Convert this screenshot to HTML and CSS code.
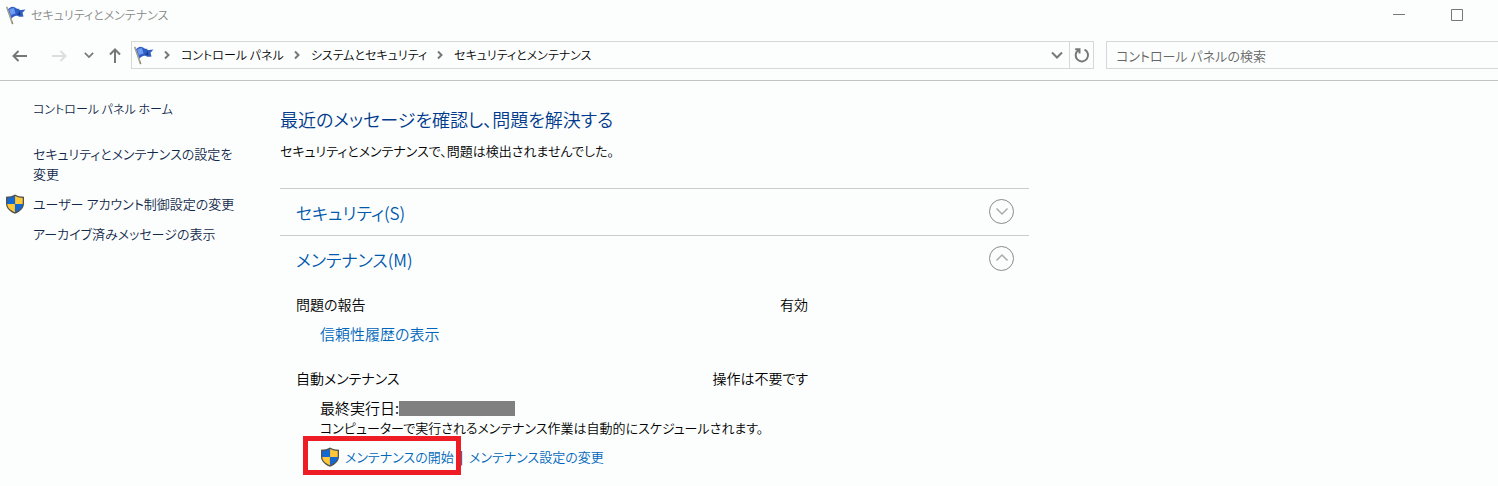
FILE: index.html
```html
<!DOCTYPE html>
<html lang="ja">
<head>
    <meta charset="UTF-8">
    <meta name="viewport" content="width=device-width, initial-scale=1.0">
    <title>セキュリティとメンテナンス</title>
    <link rel="stylesheet" href="styles.css">
</head>
<body>
    <!-- shared icons -->
    <svg class="defs" width="0" height="0" aria-hidden="true">
        <symbol id="flag" viewBox="0 0 20 20">
            <path d="M1 2.5l5.5 16" stroke="#8b8578" stroke-width="1.6" stroke-linecap="round"/>
            <path d="M1 1.6l5 15" stroke="#c9c5b8" stroke-width=".6"/>
            <path d="M2.2 4.2C4 2 6.500 1 9 2.600c1.500 1 2.800 1.500 4.300 1.200l-.3 1.500 6.500-.8-3 3.200 1 3.800c-2 .4-3.600.6-5.300-.3-2.200-1-4-.4-6.700 2.300z" fill="#2f5fc4"/>
            <path d="M3.200 5C5 3.200 6.500 2.800 8.200 3.600l1.400 5.200c-1.500-.3-3 .2-4.600 1.600z" fill="#6f9cf0"/>
            <path d="M13.300 3.800l1.200 6.600-4-1.300 2.500-1z" fill="#173a8c"/>
        </symbol>
        <symbol id="shield" viewBox="0 0 20 20">
            <path d="M10 .4c2.700 1.500 5.400 2.200 9 2.300v6.800c0 4.700-3.600 8.200-9 10.300C4.600 17.700 1 14.200 1 9.500V2.700C4.600 2.600 7.300 1.900 10 .4z" fill="#53524c"/>
            <path d="M9.900 2v7.900H2.300V4.100c2.700-.2 5.300-.8 7.600-2.100z" fill="#1269d3"/>
            <path d="M10.100 2c2.300 1.300 4.900 1.900 7.600 2.100v5.800h-7.600z" fill="#ffc83a"/>
            <path d="M2.300 10.100h7.600v8.200c-4.500-1.900-7.500-4.700-7.600-8.200z" fill="#ffc83a"/>
            <path d="M17.700 10.100h-7.600v8.200c4.500-1.900 7.500-4.700 7.600-8.200z" fill="#1269d3"/>
        </symbol>
        <symbol id="down" viewBox="0 0 12 12"><path d="M1 3.500l5 5 5-5"/></symbol>
        <symbol id="right" viewBox="0 0 12 12"><path d="M4 2.500l3.500 3.500L4 9.500"/></symbol>
    </svg>

    <header class="titlebar">
        <svg class="flag"><use href="#flag"/></svg>
        <span class="title">セキュリティとメンテナンス</span>
        <button class="window-btn" aria-label="最小化"><svg class="line-icon thin" width="14" height="14"><path d="M1 6.500h12"/></svg></button>
        <button class="window-btn" aria-label="最大化"><svg class="line-icon thin" width="14" height="14"><path d="M1.500 1.500h11v11h-11z"/></svg></button>
    </header>

    <nav class="toolbar">
        <div class="history">
            <button aria-label="戻る"><svg class="line-icon" width="16" height="14"><path d="M15 8H1.500M6.500 3L1.500 8l5 5"/></svg></button>
            <button aria-label="進む" disabled><svg class="line-icon" width="16" height="14"><path d="M1 8h13.500M9.500 3l5 5-5 5"/></svg></button>
            <button aria-label="最近表示した場所"><svg class="line-icon" width="10" height="10"><use href="#down"/></svg></button>
            <button aria-label="上へ"><svg class="line-icon" width="12" height="16"><path d="M6 16V2.500M1 7.500l5-5 5 5"/></svg></button>
        </div>
        <div class="address">
            <svg class="flag"><use href="#flag"/></svg>
            <svg class="line-icon sep" width="12" height="12"><use href="#right"/></svg>
            <a href="#">コントロール パネル</a>
            <svg class="line-icon sep" width="12" height="12"><use href="#right"/></svg>
            <a href="#">システムとセキュリティ</a>
            <svg class="line-icon sep" width="12" height="12"><use href="#right"/></svg>
            <a href="#">セキュリティとメンテナンス</a>
            <button class="drop" aria-label="以前の場所"><svg class="line-icon" width="12" height="12"><use href="#down"/></svg></button>
            <button class="refresh" aria-label="最新の情報に更新"><svg class="line-icon" width="16" height="16"><path d="M10.500 2.600A6.200 6.200 0 1 1 4.200 3.200M1.200 2.200h4.300v4.300"/></svg></button>
        </div>
        <input class="search" type="search" aria-label="検索" placeholder="コントロール パネルの検索">
    </nav>

    <div class="content">
        <aside class="sidebar">
            <a class="home" href="#">コントロール パネル ホーム</a>
            <a href="#">セキュリティとメンテナンスの設定を<br>変更</a>
            <a class="with-shield" href="#"><svg class="shield"><use href="#shield"/></svg>ユーザー アカウント制御設定の変更</a>
            <a href="#">アーカイブ済みメッセージの表示</a>
        </aside>

        <main class="main">
            <h1>最近のメッセージを確認し、問題を解決する</h1>
            <p class="lead">セキュリティとメンテナンスで、問題は検出されませんでした。</p>

            <section class="group">
                <div class="group-head">
                    <h2>セキュリティ(S)</h2>
                    <button class="toggle" aria-label="セキュリティを展開"><svg class="line-icon" width="14" height="14" viewBox="0 0 14 14"><path d="M1.500 4.500L7 10l5.500-5.500"/></svg></button>
                </div>
            </section>

            <section class="group">
                <div class="group-head">
                    <h2>メンテナンス(M)</h2>
                    <button class="toggle" aria-label="メンテナンスを折りたたむ"><svg class="line-icon" width="14" height="14" viewBox="0 0 14 14"><path d="M1.500 9.500L7 4l5.500 5.500"/></svg></button>
                </div>
                <div class="item">
                    <div class="status"><span>問題の報告</span><span>有効</span></div>
                    <div class="details">
                        <a class="link" href="#">信頼性履歴の表示</a>
                    </div>
                </div>
                <div class="item">
                    <div class="status"><span>自動メンテナンス</span><span>操作は不要です</span></div>
                    <div class="details">
                        <div class="last-run">最終実行日:<span class="masked"></span></div>
                        <div class="kana">コンピューターで実行されるメンテナンス作業は自動的にスケジュールされます。</div>
                        <div class="actions">
                            <a class="link start" href="#"><svg class="shield"><use href="#shield"/></svg>メンテナンスの開始</a>
                            <span class="bar">|</span>
                            <a class="link" href="#">メンテナンス設定の変更</a>
                        </div>
                    </div>
                </div>
            </section>
        </main>
    </div>
</body>
</html>
```
FILE: styles.css
```css
* { box-sizing: border-box; }
body { margin: 0; background: #fcfefd; color: #000; font: 14px/20px "Noto Sans CJK JP", sans-serif; font-weight: 350; font-feature-settings: "palt"; overflow-x: hidden; }
a { color: inherit; text-decoration: none; }
a:hover { text-decoration: underline; }
button { padding: 0; border: none; background: none; color: inherit; display: flex; align-items: center; justify-content: center; }
h1, h2, p { margin: 0; font-weight: inherit; }
.defs { position: absolute; }
.line-icon { display: block; fill: none; stroke: currentColor; stroke-width: 2; flex: none; }
.line-icon.thin { stroke-width: 1; }
.flag { width: 20px; height: 20px; flex: none; }
.shield { width: 20px; height: 20px; flex: none; }

.titlebar { display: flex; align-items: center; height: 30px; padding-left: 6px; color: #888; font-size: 12px; }
.title { flex: 1; margin-left: 5px; }
.window-btn { width: 58px; height: 30px; color: #777; }
.window-btn:last-child { margin-right: 12px; }

.toolbar { display: flex; align-items: center; height: 51px; border-bottom: 1px solid #c2c4c3; }
.history { display: flex; align-items: center; width: 131px; padding-left: 12px; color: #777; }
.history button { width: 16px; height: 24px; }
.history button:nth-child(2) { margin-left: 23px; color: #ddd; }
.history button:nth-child(3) { margin-left: 14px; }
.history button:nth-child(4) { margin-left: 10px; }
.address { display: flex; align-items: center; flex: 18; height: 28px; border: 1px solid #d6d8d7; padding-left: 2px; font-size: 12px; }
.sep { margin: 0 8px 0 7px; color: #777; }
.drop { width: 24px; height: 26px; margin-left: auto; color: #777; }
.refresh { width: 24px; height: 26px; border-left: 1px solid #d6d8d7; color: #777; }
.search { flex: 7; min-width: 0; height: 28px; margin: 0 0 0 12px; padding: 0 9px; border: 1px solid #d6d8d7; border-right: none; border-radius: 0; background: none; font: inherit; font-size: 13px; font-feature-settings: inherit; appearance: none; }
.search::placeholder { color: #666; opacity: 1; }

.content { display: flex; }
.sidebar { width: 280px; flex: none; display: flex; flex-direction: column; gap: 10px; padding: 18px 0 0 33px; color: #13294b; font-size: 13px; }
.home { margin-bottom: 15px; font-size: 12px; }
.with-shield { display: flex; align-items: center; margin-left: -28px; }
.with-shield .shield { margin-right: 8px; }

.main { flex: 1; max-width: 749px; padding-top: 24px; }
h1 { color: #003a8c; font-size: 18px; line-height: 28px; }
.lead { margin: 8px 0 27px; font-size: 13px; }
.group { border-top: 1px solid #cbcdcc; }
.group-head { display: flex; align-items: center; justify-content: space-between; height: 46px; padding: 0 15px 2px 16px; }
h2 { color: #0058ad; font-size: 17px; line-height: 28px; padding-top: 4px; }
.toggle { width: 25px; height: 25px; border: 1px solid #8a8a8a; border-radius: 50%; color: #aaa; }
.toggle .line-icon { stroke-width: 1.5; }
.item { width: 512px; margin: 12px 0 24px 16px; }
.status { display: flex; justify-content: space-between; }
.details { padding: 10px 0 0 24px; font-size: 15px; }
.link { color: #0066bb; }
.last-run { display: flex; align-items: center; }
.masked { width: 116px; height: 15px; background: #808080; }
.kana { font-size: 13px; white-space: nowrap; }
.actions { display: flex; align-items: center; gap: 6px; margin-top: 9px; font-size: 13px; }
.start { position: relative; display: flex; align-items: center; }
.start .shield { margin-right: 5px; }
.start::after { content: ""; position: absolute; inset: -11px -7px -8px -17px; border: 5px solid #ee1c24; }
```
